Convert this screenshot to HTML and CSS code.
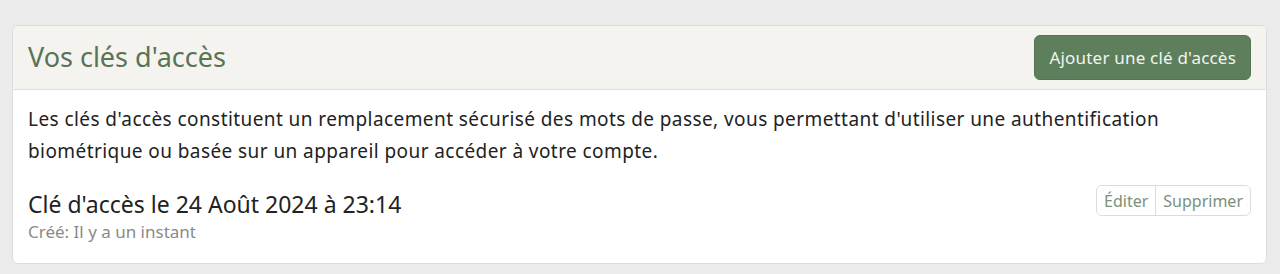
FILE: index.html
```html
<!DOCTYPE html>
<html lang="fr">
<head>
<meta charset="utf-8">
<title>Vos clés d'accès</title>
<link rel="stylesheet" href="styles.css">
</head>
<body>
<div class="page">
  <section class="card">
    <header class="card-header">
      <h2 class="card-title">Vos clés d'accès</h2>
      <button class="btn-primary" type="button">Ajouter une clé d'accès</button>
    </header>
    <div class="card-body">
      <p class="intro">Les clés d'accès constituent un remplacement sécurisé des mots de passe, vous permettant d'utiliser une authentification biométrique ou basée sur un appareil pour accéder à votre compte.</p>
      <div class="passkey">
        <div class="passkey-info">
          <div class="passkey-name">Clé d'accès le 24 Août 2024 à 23:14</div>
          <div class="passkey-meta">Créé: Il y a un instant</div>
        </div>
        <div class="btn-group">
          <button class="btn-small" type="button">Éditer</button>
          <button class="btn-small" type="button">Supprimer</button>
        </div>
      </div>
    </div>
  </section>
</div>
</body>
</html>
```
FILE: styles.css
```css
html, body {
  margin: 0;
  padding: 0;
  background: #ebebeb;
}
body {
  font-family: "Noto Sans", "Open Sans", "Liberation Sans", sans-serif;
  color: #222;
}
.page {
  padding: 25px 13px 11px 12px;
}
.card {
  background: #fff;
  border: 1px solid #dcdcdc;
  border-radius: 6px;
  overflow: hidden;
}
.card-header {
  display: flex;
  align-items: center;
  justify-content: space-between;
  height: 63px;
  padding: 0 15px 0 15px;
  background: #f4f3ef;
  border-bottom: 1px solid #e0e0dc;
}
.card-title {
  margin: 0 0 3px 0;
  font-weight: 400;
  font-size: 27px;
  color: #5a7356;
}
.btn-primary {
  font-family: inherit;
  font-size: 17px;
  letter-spacing: 0.2px;
  color: #f2f5f1;
  background: #5e7f5c;
  border: 1px solid #56744f;
  border-radius: 6px;
  height: 45px;
  padding: 0 14px;
  cursor: pointer;
}
.card-body {
  padding: 13px 15px 19px 15px;
}
.intro {
  margin: 0;
  font-size: 19px;
  letter-spacing: 0.42px;
  line-height: 32px;
}
.passkey {
  display: flex;
  align-items: flex-start;
  justify-content: space-between;
  margin-top: 21px;
}
.passkey-name {
  font-size: 23px;
  line-height: 32px;
}
.passkey-meta {
  font-size: 17px;
  line-height: 24px;
  color: #8a8a8a;
}
.btn-group {
  display: flex;
  margin-top: -3px;
  border: 1px solid #d9dcd8;
  border-radius: 6px;
  overflow: hidden;
}
.btn-small {
  font-family: inherit;
  font-size: 16px;
  color: #7d907a;
  background: #fff;
  border: 0;
  height: 29px;
  padding: 0 7px;
  cursor: pointer;
}
.btn-small + .btn-small {
  border-left: 1px solid #d9dcd8;
}
```
